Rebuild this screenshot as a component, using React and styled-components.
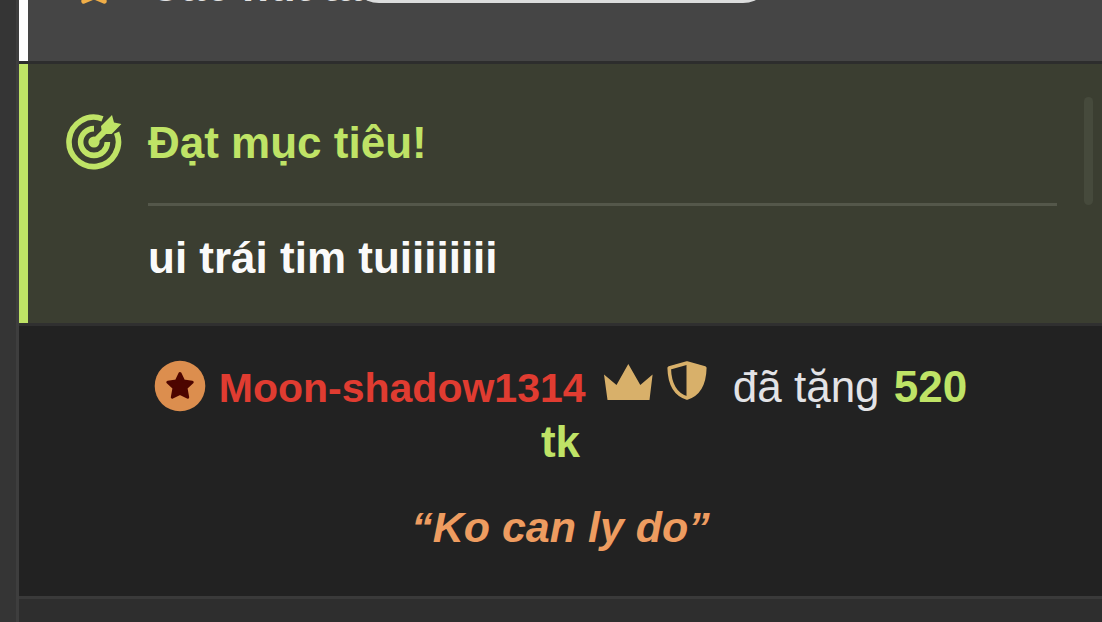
import styled, { createGlobalStyle } from "styled-components";

const GlobalStyle = createGlobalStyle`
  * {
    box-sizing: border-box;
  }

  body {
    margin: 0;
    background-color: #2e2e2e;
    font-family: "Liberation Sans", Arial, sans-serif;
  }
`;

const Page = styled.div`
  display: flex;
  min-height: 100vh;
  overflow: hidden;
`;

const Rail = styled.aside`
  flex: 0 0 19px;
  background-color: #353535;
  border-right: 3px solid #3e3e3e;
`;

const Feed = styled.main`
  flex: 1;
  min-width: 0;
  position: relative;
`;

const Row = styled.section`
  background-color: ${(props) => props.$bg};
  border-left: ${(props) => (props.$accent ? `9px solid ${props.$accent}` : "none")};
`;

const Divider = styled.hr`
  height: 3px;
  margin: 0;
  border: none;
  background-color: ${(props) => props.$color};
`;

// only the bottom edge of the scrolled message stays visible
const Scrolled = styled.div`
  display: flex;
  flex-direction: column;
  justify-content: flex-end;
  height: 61px;
  padding: 0 44px 49px;
  overflow: hidden;
`;

const ScrolledLine = styled.p`
  display: flex;
  flex: none;
  align-items: center;
  gap: 33px;
  margin: 0;
  font-size: 44px;
  font-weight: bold;
  line-height: 52px;
  color: #e2e2e2;
`;

const Pill = styled.div`
  position: absolute;
  top: -57px;
  left: 50%;
  width: 424px;
  height: 60px;
  margin-left: -212px;
  border-radius: 30px;
  background-color: #dcdddd;
`;

const Goal = styled.div`
  display: grid;
  grid-template-columns: 56px 1fr;
  column-gap: 26px;
  padding: 50px 45px 38px 38px;
`;

const GoalTitle = styled.h2`
  margin: 0;
  padding-bottom: 32px;
  border-bottom: 3px solid #54574a;
  font-size: 44px;
  line-height: 57px;
  color: #bfe366;
`;

const GoalText = styled.p`
  grid-column: 2;
  margin: 0;
  padding-top: 24px;
  font-size: 44px;
  font-weight: bold;
  line-height: 55px;
  color: #fafafa;
`;

const Scrollbar = styled.div`
  position: absolute;
  top: 97px;
  right: 9px;
  width: 9px;
  height: 108px;
  border-radius: 5px;
  background-color: #464a3c;
`;

const Tip = styled.div`
  padding: 34px 120px 42px;
  text-align: center;
`;

const TipLine = styled.p`
  margin: 0;
  font-size: 44px;
  line-height: 54px;
  color: #e3e3e6;
`;

const Badge = styled.svg`
  vertical-align: -10px;
`;

const User = styled.a`
  margin: 0 18px 0 13px;
  font-size: 41px;
  font-weight: bold;
  color: #e03c31;
  text-decoration: none;
`;

const Badges = styled.span`
  display: inline-flex;
  gap: 14px;
  margin-right: 14px;
  vertical-align: 1px;
`;

const Amount = styled.strong`
  margin-left: 2px;
  color: #bfe366;
`;

const Quote = styled.p`
  margin: 0;
  padding-top: 31px;
  font-size: 43px;
  font-style: italic;
  font-weight: bold;
  line-height: 54px;
  color: #ee9c60;
`;

function TargetIcon() {
  return (
    <svg width="56" height="56" viewBox="0 0 56 56" fill="none">
      <g stroke="#bfe366" strokeWidth="5.6">
        <path d="M36.5 4.8A24.7 24.7 0 1 0 50.6 18.6" />
        <path d="M28 14.6A13.4 13.4 0 1 0 41.4 28" />
        <path d="M28 28L39 17" strokeWidth="6" />
      </g>
      <circle cx="28" cy="28" r="5.6" fill="#bfe366" />
      <path d="M35 12L46 1L48 8.5L55.4 10L45.7 20H36Z" fill="#bfe366" />
    </svg>
  );
}

function StarIcon() {
  return (
    <svg width="44" height="44" viewBox="0 0 28 28">
      <path
        d="M14 2L17.6 9.6L26 10.7L19.8 16.5L20.6 23.8L14 21L7.4 23.8L8.2 16.5L2 10.7L10.4 9.6Z"
        fill="#f0ae48"
        stroke="#f0ae48"
        strokeWidth="3"
        strokeLinejoin="round"
      />
    </svg>
  );
}

function StarBadge() {
  return (
    <Badge width="52" height="52" viewBox="0 0 52 52">
      <circle cx="26" cy="26" r="25.3" fill="#dc8e4e" />
      <path
        d="M26 13.5L29.7 21.1L38.2 22.2L32 28L33.7 37.2L26 33.4L18.3 37.2L20 28L13.8 22.2L22.3 21.1Z"
        fill="#4d0500"
        stroke="#4d0500"
        strokeWidth="3"
        strokeLinejoin="round"
      />
    </Badge>
  );
}

function CrownIcon() {
  return (
    <svg width="49" height="40" viewBox="0 0 49 40">
      <path d="M0 13.5L12.5 24L24.3 3L36.3 24L48.6 13.5L45.5 39H3.5Z" fill="#d8b06a" />
    </svg>
  );
}

function ShieldIcon() {
  return (
    <svg width="40" height="40" viewBox="0 0 40 40">
      <path
        d="M20 2L37.8 7C37.4 22 33 33 20 37C7 33 2.6 22 2.2 7Z"
        fill="none"
        stroke="#d8b06a"
        strokeWidth="3.6"
        strokeLinejoin="round"
      />
      <path d="M19.5 2L38 7C37.4 22 33 33 19.5 37Z" fill="#d8b06a" />
    </svg>
  );
}

function App() {
  return (
    <>
      <GlobalStyle />
      <Page>
        <Rail />
        <Feed>
          <Row $bg="#454545" $accent="#ffffff">
            <Scrolled>
              <ScrolledLine>
                <StarIcon />
                Các nút tắt
              </ScrolledLine>
            </Scrolled>
          </Row>
          <Divider $color="#2d2d2d" />
          <Row $bg="#3b3e31" $accent="#bfe366">
            <Goal>
              <TargetIcon />
              <GoalTitle>Đạt mục tiêu!</GoalTitle>
              <GoalText>ui trái tim tuiiiiiiii</GoalText>
            </Goal>
          </Row>
          <Divider $color="#303030" />
          <Row $bg="#222222">
            <Tip>
              <TipLine>
                <StarBadge />
                <User href="#">Moon-shadow1314</User>
                <Badges>
                  <CrownIcon />
                  <ShieldIcon />
                </Badges>{" "}
                đã tặng <Amount>520 tk</Amount>
              </TipLine>
              <Quote>“Ko can ly do”</Quote>
            </Tip>
          </Row>
          <Divider $color="#3a3a3a" />
          <Pill />
          <Scrollbar />
        </Feed>
      </Page>
    </>
  );
}

export default App;
